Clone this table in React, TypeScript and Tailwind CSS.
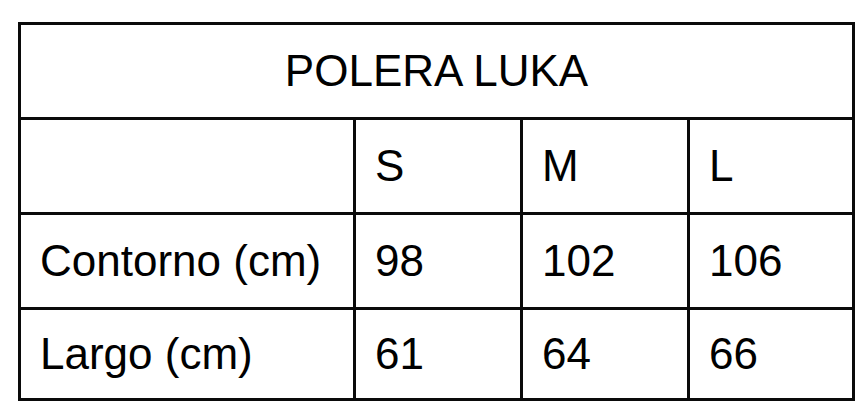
const ROWS = [
  { label: "", values: ["S", "M", "L"] },
  { label: "Contorno (cm)", values: ["98", "102", "106"] },
  { label: "Largo (cm)", values: ["61", "64", "66"] },
];

export default function App() {
  return (
    <div
      className="w-[868px] h-[418px] bg-white pl-[18px] pt-[22px]"
      style={{ fontFamily: '"Liberation Sans", Arial, sans-serif' }}
    >
      <div className="grid w-[837px] h-[379px] grid-cols-[332px_164px_164px_162px] grid-rows-[92px_92px_92px_88px] gap-[3px] p-[3px] bg-[#0a0a0a] text-[44px] leading-none text-black">
        {/* Title */}
        <div className="col-span-4 flex items-center justify-center bg-white">
          POLERA LUKA
        </div>

        {ROWS.map((row, i) => (
          <div key={i} className="contents">
            <div className="flex items-center bg-white pl-[19px]">{row.label}</div>
            {row.values.map((v) => (
              <div key={v} className="flex items-center bg-white pl-[19px]">
                {v}
              </div>
            ))}
          </div>
        ))}
      </div>
    </div>
  );
}
